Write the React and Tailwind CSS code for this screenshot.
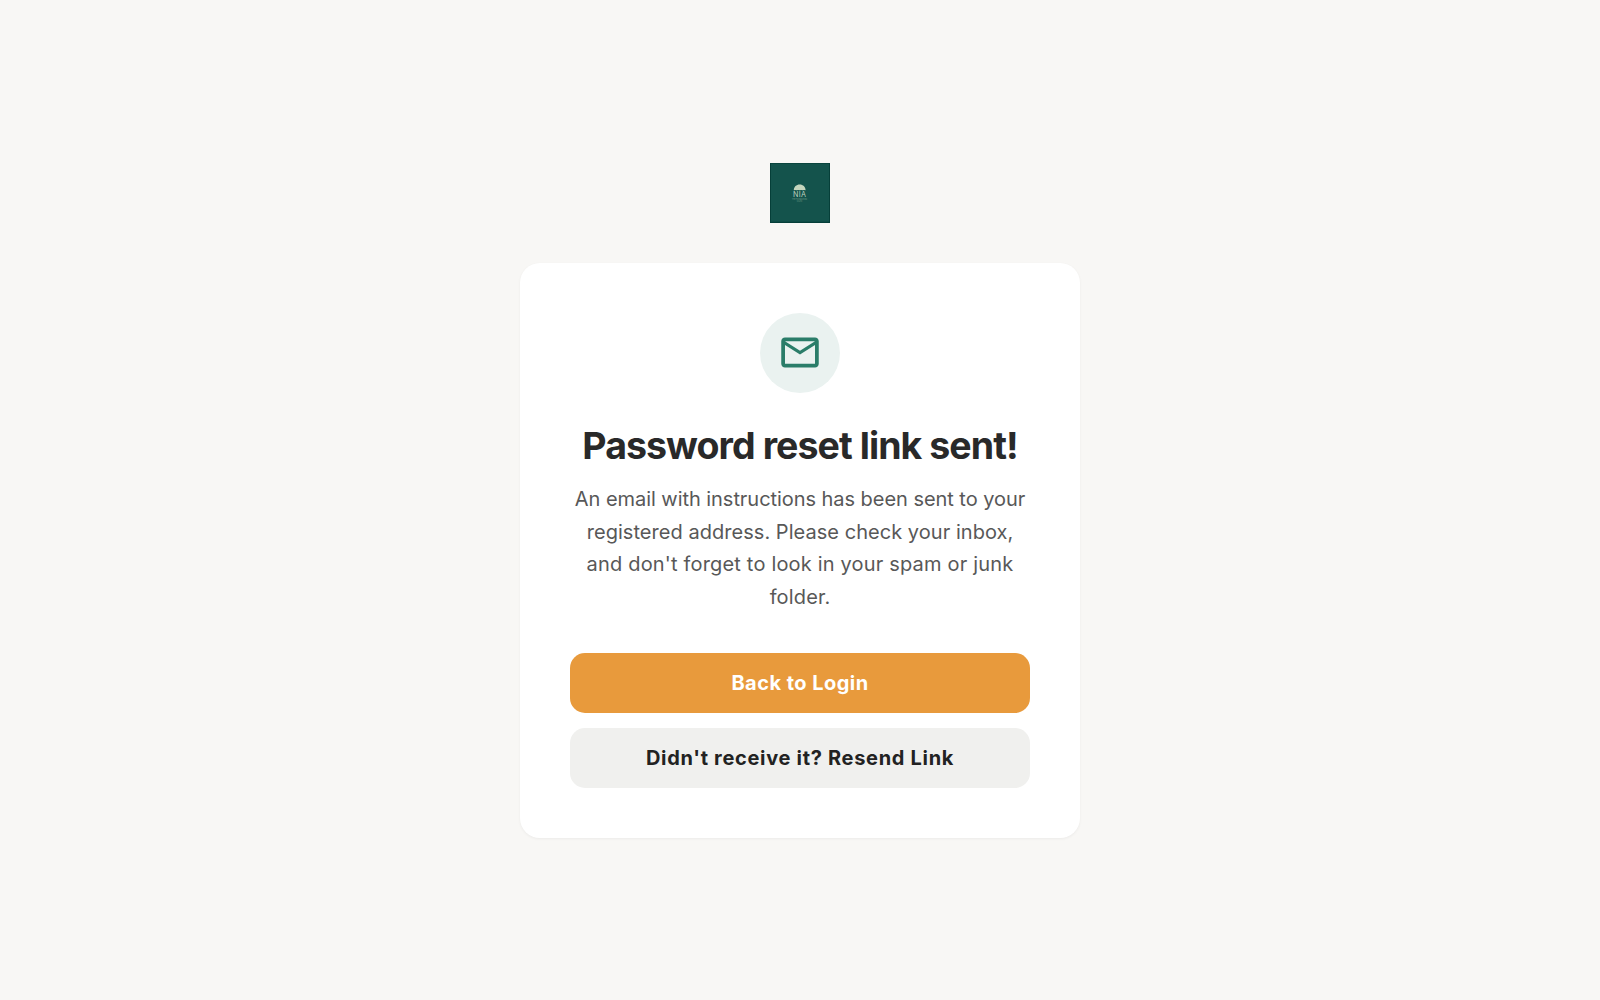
function Logo() {
  return (
    <svg className="size-[60px]" viewBox="0 0 60 60" fontFamily="Inter, sans-serif" textAnchor="middle">
      <rect width="60" height="60" fill="#063f39" />
      <rect x="1" y="0.7" width="58" height="58" fill="#14534c" />
      <path d="M23.8 27.3c0-3.4 2.6-5.7 5.9-5.7s5.9 2.3 5.9 5.7q-1.4-.8-2.9 0-1.4-.8-3 0-1.4-.8-2.9 0-1.5-.8-3 0z" fill="#c5d5bd" />
      <text x="29.5" y="33.5" fontSize="7.2" fontWeight="400" fill="#bccfbc" textLength="12.8">NIA</text>
      <text x="29.5" y="36.7" fontSize="2" fill="#6b9582" textLength="15">THE FOUNDATION</text>
      <text x="29.5" y="38.8" fontSize="1.8" fill="#5f8c7a">NIGER</text>
    </svg>
  );
}

function MailIcon() {
  return (
    <svg className="size-[46px]" viewBox="-0.267 0 24.533 24.533" fill="#2a7d69">
      <path d="M22 6c0-1.1-.9-2-2-2H4c-1.1 0-2 .9-2 2v12c0 1.1.9 2 2 2h16c1.1 0 2-.9 2-2V6zm-2 0l-8 5-8-5h16zm0 12H4V8l8 5 8-5v10z" />
    </svg>
  );
}

export default function App() {
  return (
    <main className="flex min-h-screen flex-col items-center justify-center bg-[#f8f7f5] font-[Inter,sans-serif]">
      <div className="mb-10">
        <Logo />
      </div>
      <section className="flex w-[560px] flex-col items-center rounded-[20px] bg-white p-[50px] shadow-[0_1px_3px_0_rgba(0,0,0,0.05)]">
        <div className="flex size-20 items-center justify-center rounded-full bg-[#eaf2f0]">
          <MailIcon />
        </div>
        <h1 className="mt-[30px] text-[37.5px] leading-[45px] font-bold tracking-[-0.025em] whitespace-nowrap text-[#292929]">
          Password reset link sent!
        </h1>
        <p className="mt-[15px] text-center text-[20px] leading-[32.5px] text-[#585858]">
          <span className="block tracking-[-0.05px]">An email with instructions has been sent to your </span>
          <span className="-mb-px block pt-px tracking-[0.04px]">registered address. Please check your inbox, </span>
          <span className="block tracking-[0.18px]">and don't forget to look in your spam or junk </span>
          <span className="-mb-px block pt-px tracking-[0.15px]">folder.</span>
        </p>
        <div className="mt-10 flex w-full flex-col gap-[15px]">
          <button className="h-[60px] rounded-[15px] bg-[#e89a3c] text-[20px] font-bold tracking-[0.46px] text-white">
            Back to Login
          </button>
          <button className="h-[60px] rounded-[15px] bg-[#f0f0ee] text-[20px] font-bold tracking-[0.69px] text-[#222222]">
            Didn't receive it? Resend Link
          </button>
        </div>
      </section>
    </main>
  );
}
